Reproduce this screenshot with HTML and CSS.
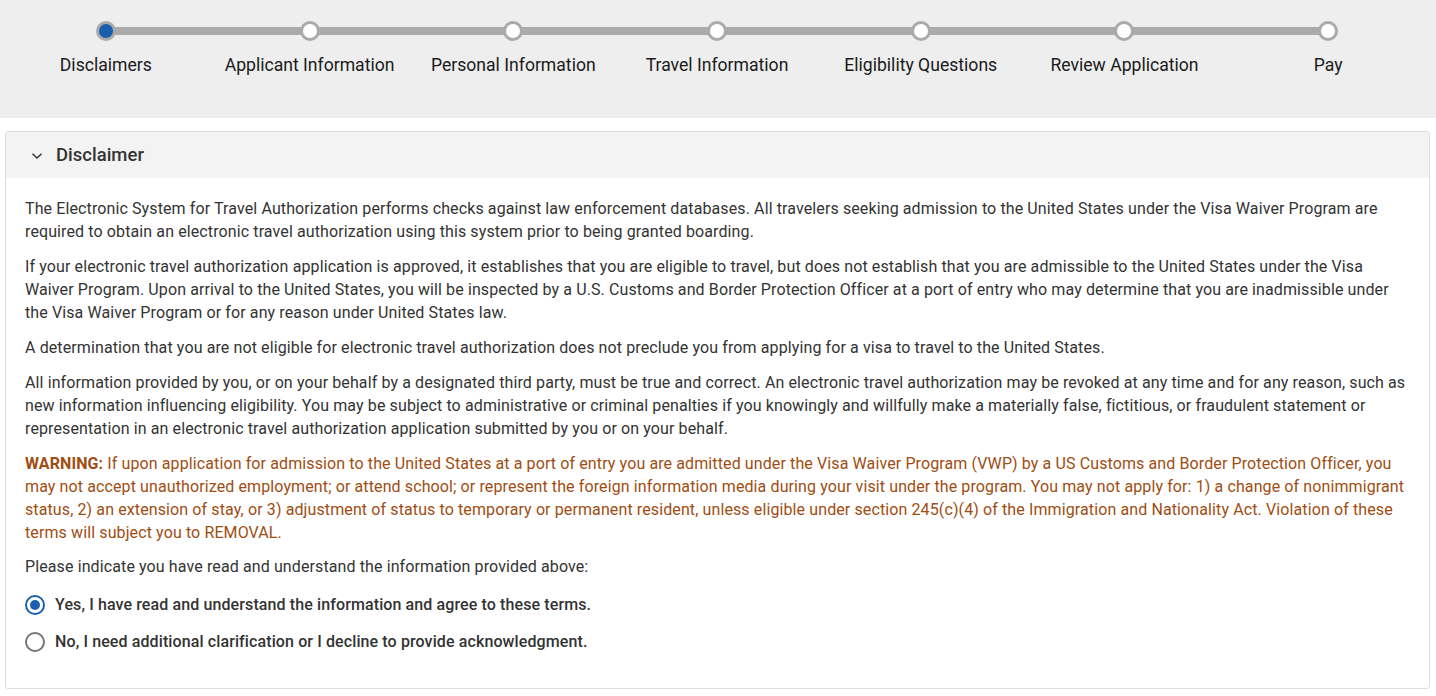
FILE: index.html
```html
<!DOCTYPE html>
<html lang="en">
<head>
  <meta charset="UTF-8" />
  <title>ESTA Application - Disclaimers</title>
  <link rel="stylesheet" href="styles.css">
</head>
<body>
  <!-- progress steps -->
  <div class="steps_bar">
    <ul class="steps">
      <li class="step active"><span class="dot"></span><span class="label">Disclaimers</span></li>
      <li class="step"><span class="dot"></span><span class="label">Applicant Information</span></li>
      <li class="step"><span class="dot"></span><span class="label">Personal Information</span></li>
      <li class="step"><span class="dot"></span><span class="label">Travel Information</span></li>
      <li class="step"><span class="dot"></span><span class="label">Eligibility Questions</span></li>
      <li class="step"><span class="dot"></span><span class="label">Review Application</span></li>
      <li class="step"><span class="dot"></span><span class="label">Pay</span></li>
    </ul>
  </div>

  <!-- disclaimer panel -->
  <div class="panel">
    <div class="panel_head">
      <svg class="chevron" width="12" height="8" viewBox="0 0 12 8">
        <path d="M1.5 1.8 L6 6 L10.5 1.8" fill="none" stroke="#333" stroke-width="1.5" />
      </svg>
      <span class="panel_title">Disclaimer</span>
    </div>
    <div class="panel_body">
      <p>The Electronic System for Travel Authorization performs checks against law enforcement databases. All travelers seeking admission to the United States under the Visa Waiver Program are required to obtain an electronic travel authorization using this system prior to being granted boarding.</p>
      <p>If your electronic travel authorization application is approved, it establishes that you are eligible to travel, but does not establish that you are admissible to the United States under the Visa Waiver Program. Upon arrival to the United States, you will be inspected by a U.S. Customs and Border Protection Officer at a port of entry who may determine that you are inadmissible under the Visa Waiver Program or for any reason under United States law.</p>
      <p>A determination that you are not eligible for electronic travel authorization does not preclude you from applying for a visa to travel to the United States.</p>
      <p>All information provided by you, or on your behalf by a designated third party, must be true and correct. An electronic travel authorization may be revoked at any time and for any reason, such as new information influencing eligibility. You may be subject to administrative or criminal penalties if you knowingly and willfully make a materially false, fictitious, or fraudulent statement or representation in an electronic travel authorization application submitted by you or on your behalf.</p>
      <p class="warning"><strong>WARNING:</strong> If upon application for admission to the United States at a port of entry you are admitted under the Visa Waiver Program (VWP) by a US Customs and Border Protection Officer, you may not accept unauthorized employment; or attend school; or represent the foreign information media during your visit under the program. You may not apply for: 1) a change of nonimmigrant status, 2) an extension of stay, or 3) adjustment of status to temporary or permanent resident, unless eligible under section 245(c)(4) of the Immigration and Nationality Act. Violation of these terms will subject you to REMOVAL.</p>
      <p class="prompt">Please indicate you have read and understand the information provided above:</p>
      <div class="options">
        <label class="option checked"><span class="radio"></span>Yes, I have read and understand the information and agree to these terms.</label>
        <label class="option"><span class="radio"></span>No, I need additional clarification or I decline to provide acknowledgment.</label>
      </div>
    </div>
  </div>
</body>
</html>
```

FILE: styles.css
```css
body,
ul,
p {
  margin: 0px;
  padding: 0px;
}

body {
  font-family: Roboto, "Liberation Sans", Arial, sans-serif;
  color: #333;
  background-color: #fff;
}

.steps_bar {
  height: 118px;
  background-color: #eeeeee;
  padding: 0 6px 0 4px;
  box-sizing: border-box;
}

.steps {
  list-style: none;
  display: flex;
  padding-top: 21px;
}

.step {
  flex: 1;
  display: flex;
  flex-direction: column;
  align-items: center;
  position: relative;
}

/* connecting line to the previous step */
.step + .step::before {
  content: "";
  position: absolute;
  left: -50%;
  right: 50%;
  top: 6px;
  height: 8px;
  background-color: #aaaaaa;
}

.dot {
  width: 14px;
  height: 14px;
  border: 3px solid #aaaaaa;
  border-radius: 50%;
  background-color: #fff;
  position: relative;
  z-index: 1;
}

.step.active .dot {
  background-color: #1a5fae;
}

.label {
  margin-top: 12px;
  font-size: 17.6px;
  line-height: 24px;
  color: #1a1a1a;
  white-space: nowrap;
}

.panel {
  margin: 13px 6px 0 5px;
  border: 1px solid #dddddd;
  border-radius: 3px;
  overflow: hidden;
}

.panel_head {
  height: 46px;
  background-color: #f3f3f3;
  display: flex;
  align-items: center;
  padding-left: 25px;
}

.chevron {
  margin-right: 13px;
  margin-top: 1px;
}

.panel_title {
  font-size: 18.5px;
  font-weight: 500;
  color: #333;
  margin-top: -1px;
}

.panel_body {
  padding: 19px 19px 35px 19px;
  font-size: 16px;
  line-height: 23px;
  letter-spacing: 0.11px;
}

.panel_body p {
  margin-bottom: 12px;
}

.panel_body .prompt {
  margin-top: -1px;
}

.warning {
  color: #a04d12;
}

.warning strong {
  font-weight: 700;
}

.options {
  display: flex;
  flex-direction: column;
  gap: 14px;
  padding-top: 3px;
}

.option {
  display: flex;
  align-items: center;
  font-weight: 500;
  color: #333;
  cursor: pointer;
}

.radio {
  width: 16px;
  height: 16px;
  border: 2px solid #767676;
  border-radius: 50%;
  margin-right: 10px;
  box-sizing: content-box;
  display: flex;
  align-items: center;
  justify-content: center;
}

.option.checked .radio {
  border-color: #1a5fae;
}

.option.checked .radio::after {
  content: "";
  width: 10px;
  height: 10px;
  border-radius: 50%;
  background-color: #1a5fae;
}
```
